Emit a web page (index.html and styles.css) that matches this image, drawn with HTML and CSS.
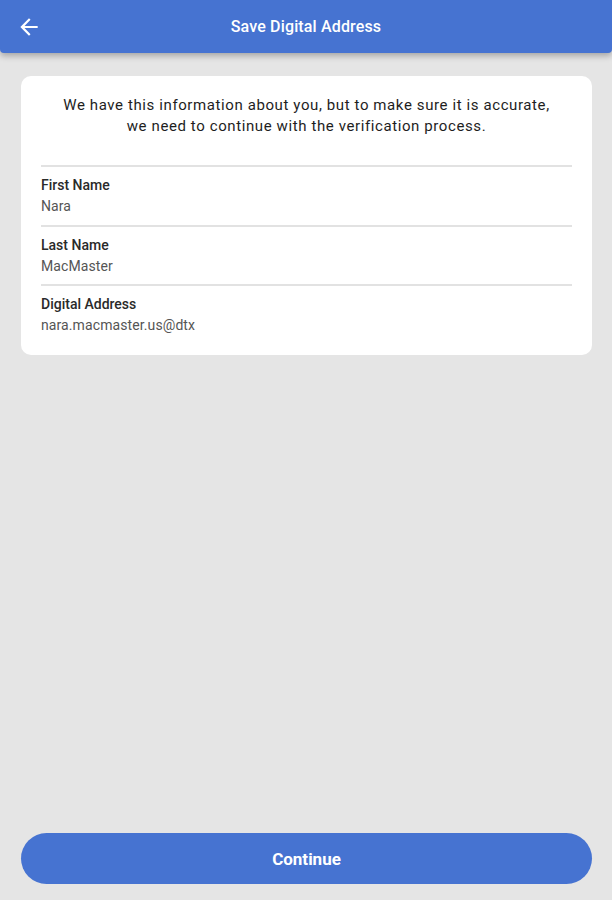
FILE: index.html
```html
<!DOCTYPE html>
<html>
<head>
<meta charset="utf-8">
<link rel="stylesheet" href="styles.css">
</head>
<body>
<div class="page">
  <header class="appbar">
    <svg class="back" width="26" height="26" viewBox="0 0 24 24"><path d="M20 11H7.83l5.59-5.59L12 4l-8 8 8 8 1.41-1.41L7.83 13H20v-2z" fill="#fff"/></svg>
    <h1 class="title">Save Digital Address</h1>
  </header>
  <main class="card">
    <p class="intro">We have this information about you, but to make sure it is accurate,<br>we need to continue with the verification process.</p>
    <div class="row">
      <div class="label">First Name</div>
      <div class="value">Nara</div>
    </div>
    <div class="row">
      <div class="label">Last Name</div>
      <div class="value">MacMaster</div>
    </div>
    <div class="row last">
      <div class="label">Digital Address</div>
      <div class="value">nara.macmaster.us@dtx</div>
    </div>
  </main>
  <button class="continue">Continue</button>
</div>
</body>
</html>
```
FILE: styles.css
```css
* { box-sizing: border-box; }
html, body { margin: 0; padding: 0; }
body {
  background: #e5e5e5;
  font-family: Roboto, "Liberation Sans", sans-serif;
}
.page {
  min-height: 900px;
  display: flex;
  flex-direction: column;
}
.appbar {
  height: 53px;
  background: #4673d1;
  border-radius: 0 0 4px 4px;
  box-shadow: 0 3px 6px rgba(0,0,0,0.28);
  display: flex;
  align-items: center;
  justify-content: center;
  position: relative;
}
.back {
  position: absolute;
  left: 16px;
  top: 14px;
}
.title {
  margin: 0;
  color: #fff;
  font-size: 16px;
  font-weight: 500;
  letter-spacing: 0.15px;
}
.card {
  margin: 23px 20px 0 21px;
  background: #fff;
  border-radius: 10px;
  padding: 19px 20px 19px;
}
.intro {
  margin: 0 0 28px;
  text-align: center;
  font-size: 15px;
  line-height: 21px;
  letter-spacing: 0.6px;
  color: #1e1e1e;
}
.row {
  border-top: 2px solid #e2e2e2;
  padding: 8px 0 7.5px;
}
.row.last { padding-bottom: 0; }
.label {
  font-size: 14px;
  line-height: 20px;
  color: #2a2a2a;
  font-weight: 500;
}
.value {
  font-size: 14px;
  line-height: 22px;
  letter-spacing: 0.1px;
  color: #555;
}
.continue {
  margin: auto 20px 16px 21px;
  height: 51px;
  border: none;
  border-radius: 26px;
  background: #4673d1;
  color: #fff;
  font-family: Roboto, "Liberation Sans", sans-serif;
  font-size: 17px;
  font-weight: 700;
}
```
